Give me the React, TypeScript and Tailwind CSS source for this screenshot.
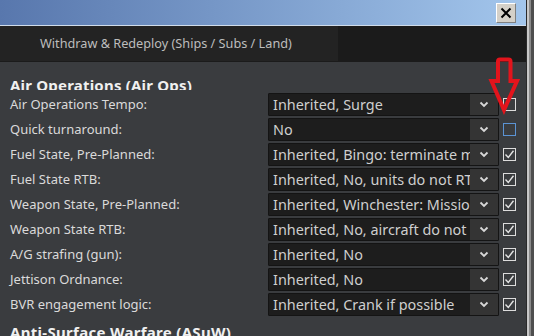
import React from 'react';

type Row = { label: string; value: string; state: 'checked' | 'empty' | 'focus' };

const rows: Row[] = [
  { label: 'Air Operations Tempo:', value: 'Inherited, Surge', state: 'empty' },
  { label: 'Quick turnaround:', value: 'No', state: 'focus' },
  { label: 'Fuel State, Pre-Planned:', value: 'Inherited, Bingo: terminate mission', state: 'checked' },
  { label: 'Fuel State RTB:', value: 'Inherited, No, units do not RTB', state: 'checked' },
  { label: 'Weapon State, Pre-Planned:', value: 'Inherited, Winchester: Mission', state: 'checked' },
  { label: 'Weapon State RTB:', value: 'Inherited, No, aircraft do not RTB', state: 'checked' },
  { label: 'A/G strafing (gun):', value: 'Inherited, No', state: 'checked' },
  { label: 'Jettison Ordnance:', value: 'Inherited, No', state: 'checked' },
  { label: 'BVR engagement logic:', value: 'Inherited, Crank if possible', state: 'checked' },
];

function Chevron() {
  return (
    <svg width="10" height="7" viewBox="0 0 10 7">
      <path d="M1.5 1.5 L5 5 L8.5 1.5" fill="none" stroke="#d8d8d8" strokeWidth="1.8" />
    </svg>
  );
}

function Checkbox({ state }: { state: Row['state'] }) {
  const border = state === 'focus' ? 'border-[#5b93d4]' : 'border-[#dcdcdc]';
  return (
    <div className={`w-[13px] h-[13px] border ${border} flex items-center justify-center`}>
      {state === 'checked' && (
        <svg width="11" height="11" viewBox="0 0 11 11">
          <path d="M1.5 5.5 L4.3 8.5 L9.5 1.8" fill="none" stroke="#e4e4e4" strokeWidth="1.4" />
        </svg>
      )}
    </div>
  );
}

function Select({ value }: { value: string }) {
  return (
    <div className="w-[231px] h-[23px] flex bg-[#1d1d1d] border border-[#141414] rounded-[1px]">
      <div className="flex-1 overflow-hidden whitespace-nowrap pl-[4px] text-[14.4px] leading-[21px] text-[#cfcfcf]">
        {value}
      </div>
      <div className="w-[28px] bg-[#343434] flex items-center justify-center">
        <Chevron />
      </div>
    </div>
  );
}

export default function App() {
  return (
    <div
      className="w-[534px] h-[336px] overflow-hidden flex relative bg-[#3a3c3f]"
      style={{ fontFamily: '"Noto Sans", "Open Sans", sans-serif' }}
    >
      <div className="w-[526px] flex flex-col">
        <div className="h-[25px] shrink-0 bg-gradient-to-r from-[#5877ad] to-[#a3c6ec] flex items-center justify-end pr-[10px]">
          <div className="w-[20px] h-[20px] bg-[#d4d0c8] border border-[#808080] border-t-white border-l-white flex items-center justify-center">
            <svg width="12" height="12" viewBox="0 0 12 12">
              <path d="M1.5 1.5 L10.5 10.5 M10.5 1.5 L1.5 10.5" stroke="#000" strokeWidth="2" />
            </svg>
          </div>
        </div>
        <div className="h-[1px] shrink-0 bg-[#d0dcea]" />
        <div className="h-[36px] shrink-0 bg-[#1b1b1b] flex">
          <div className="w-[338px] h-[35px] bg-[#232323] pl-[40px] text-[12.7px] leading-[35px] text-[#bdbdbd] whitespace-nowrap">
            Withdraw &amp; Redeploy (Ships / Subs / Land)
          </div>
        </div>
        <div className="flex-1 bg-[#3a3c3f] pl-[10px] pt-[16px]">
          <div className="h-[12px] overflow-hidden text-[15px] leading-none font-bold text-[#f0f0f0] whitespace-nowrap tracking-[0.2px]">
            Air Operations (Air Ops)
          </div>
          <div className="mt-[3px] flex flex-col gap-[2px]">
            {rows.map((r) => (
              <div key={r.label} className="h-[23px] flex items-center">
                <div className="w-[258px] text-[13px] text-[#dadada] whitespace-nowrap">{r.label}</div>
                <Select value={r.value} />
                <div className="ml-[4px]">
                  <Checkbox state={r.state} />
                </div>
              </div>
            ))}
          </div>
          <div className="mt-[9px] text-[15px] leading-none font-bold text-[#f0f0f0] whitespace-nowrap tracking-[0.3px]">
            Anti-Surface Warfare (ASuW)
          </div>
        </div>
      </div>
      <div className="w-[8px] flex">
        <div className="w-[1px] bg-[#2a2a2a]" />
        <div className="w-[2px] bg-[#c8c8c8]" />
        <div className="w-[2px] bg-[#8a8a8a]" />
        <div className="w-[3px] bg-[#4e4e4e]" />
      </div>
      <svg className="absolute left-[488px] top-[56px]" width="34" height="60" viewBox="0 0 34 60">
        <path
          d="M10 25 V5.5 Q10 3.5 12 3.5 H20.5 Q22.5 3.5 22.5 5.5 V25 H29 L16 54 L3.5 25 Z"
          fill="none"
          stroke="#e3141c"
          strokeWidth="4"
          strokeLinejoin="miter"
        />
      </svg>
    </div>
  );
}
